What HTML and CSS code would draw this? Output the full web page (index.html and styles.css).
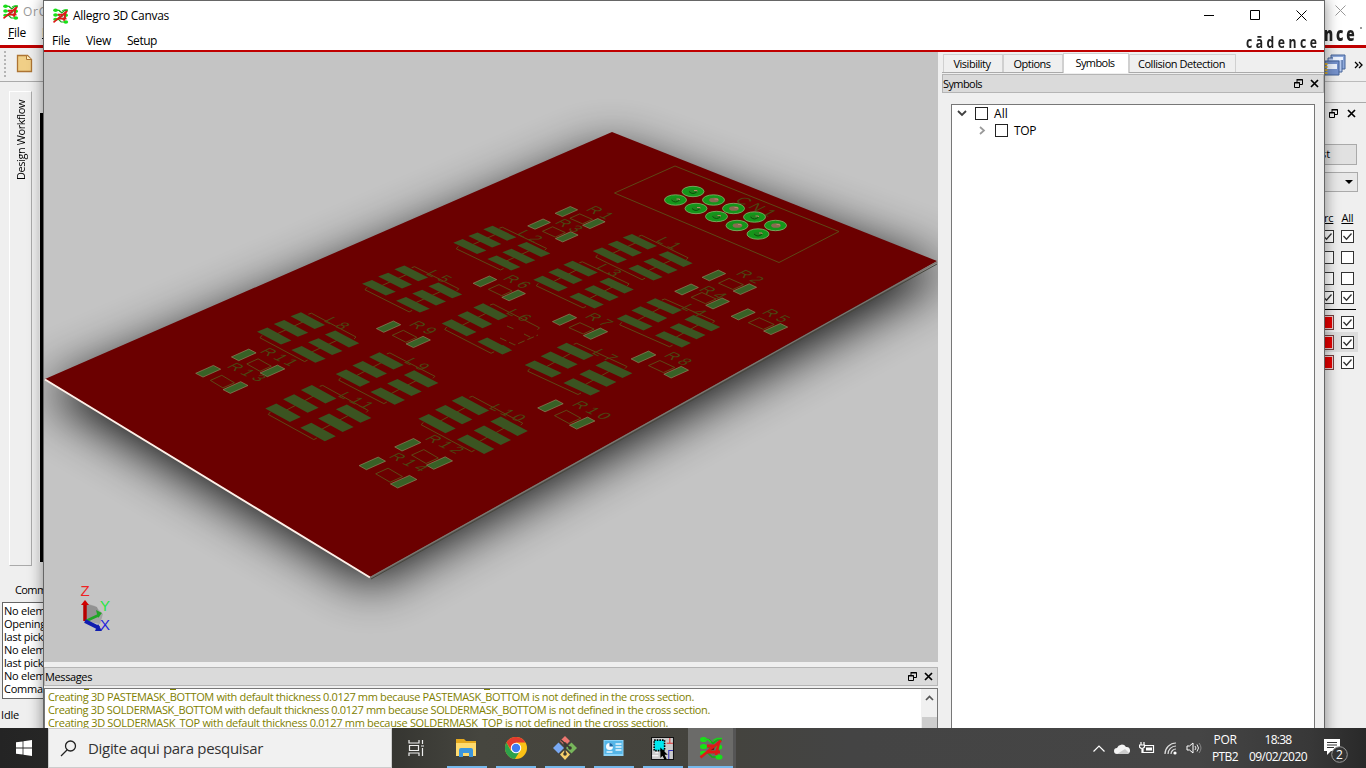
FILE: index.html
```html
<!DOCTYPE html>
<html lang="pt-BR">
<head>
<meta charset="utf-8">
<title>Allegro 3D Canvas</title>
<link rel="stylesheet" href="styles.css">
</head>
<body>
<svg class="defs" width="0" height="0">
  <symbol id="allegro" viewBox="0 0 24 24">
    <g stroke="#17a817" stroke-width="1.700" fill="none"><path d="M4 3.500h6l4 4 4-3.500h5M4 10.500h5l4 4M4 17h5l4 4h7M14 10.500h6M14 17l6-3"/></g>
    <g fill="#18e018"><ellipse cx="4.500" cy="3.500" rx="3.500" ry="2.600"/><ellipse cx="4.500" cy="10.500" rx="3.500" ry="2.600"/><ellipse cx="4.500" cy="17" rx="3.500" ry="2.300"/><ellipse cx="20" cy="11" rx="3.200" ry="2.600"/><ellipse cx="20" cy="21" rx="3.500" ry="2.600"/></g>
    <path d="M1.500 21.500 22 4.500" stroke="#e01818" stroke-width="2.500"/><path d="M8 10h7M8 16h13M20 6l-3 13" stroke="#e01818" stroke-width="2.800"/><path d="m12 14 3.500-2.500-.5 2.500z" fill="#7c1010"/><path d="M14 4.500l4-2h5M12 6.500l-3-3H5" fill="none" stroke="#1fd01f" stroke-width="1.500"/>
  </symbol>
  <symbol id="float" viewBox="0 0 9 9"><path d="M3 .5h5.500v5H6M3 0v3M.5 3.500h5v5h-5zM3 1h6M0 4h6" fill="none" stroke="#000"/></symbol>
  <symbol id="x" viewBox="0 0 9 9"><path d="m1 1 7 7m0-7-7 7" fill="none" stroke="#000" stroke-width="1.700"/></symbol>
  <symbol id="tick" viewBox="0 0 13 13"><path d="m2.500 6 3 3.200 5-5.700" fill="none" stroke="#333" stroke-width="1.300"/></symbol>
</svg>

<main class="desktop">
  <section class="back">
    <div class="back-left">
      <div class="back-title"><svg class="i17"><use href="#allegro"/></svg><span class="t dim" data-w="24">OrC</span></div>
      <div class="back-menu"><span class="t" data-w="18"><u>F</u>ile</span><span class="t"><u>E</u></span></div>
      <div class="back-tools"><i class="grip"></i>
        <svg width="17" height="19" viewBox="0 0 17 19"><path d="M1.500 1.500h10l4 4v12h-14z" fill="#f0cf87" stroke="#ad7433" stroke-width="1.300"/><path d="M10.500 1.500v4h5" fill="#fff0c0" stroke="#ad7433"/></svg>
      </div>
      <div class="back-work"><div class="workflow"><span class="t" data-w="80">Design Workflow</span></div><div class="black"></div></div>
      <div class="comm"><span class="t">Comm</span></div>
      <div class="log"><p>No elem</p><p>Opening</p><p>last pick</p><p>No elem</p><p>last pick</p><p>No elem</p><p>Comman</p></div>
      <div class="idle"><span class="t" data-w="18">Idle</span></div>
    </div>
    <div class="back-right">
      <div class="br-title"><svg width="11" height="11" viewBox="0 0 11 11"><path d="m.5.5 10 10m0-10-10 10" stroke="#999" fill="none"/></svg></div>
      <div class="br-logo"><span>nce</span><i></i></div>
      <div class="br-tools"><svg width="22" height="24" viewBox="0 0 22 24"><g stroke="#456398"><path fill="#8da8da" d="M7 2h14v14H7z"/><path fill="#b8cbef" d="M4 5h14v14H4z"/><path fill="#7692cc" d="M1 8h14v14H1z"/></g><path d="M9 4h10v3H9zM3 11h10v5H3z" fill="#eef4ff"/><path d="M2 10v11" stroke="#d3ab30" stroke-width="3" stroke-dasharray="2 1"/></svg>
        <svg width="9" height="8" viewBox="0 0 9 8"><path d="m1 1 3 3-3 3m4-6 3 3-3 3" fill="none" stroke="#000" stroke-width="1.300"/></svg></div>
      <div class="br-head"><svg class="i9"><use href="#float"/></svg><svg class="i9"><use href="#x"/></svg></div>
      <div class="br-button">st</div>
      <div class="br-combo"><i></i></div>
      <div class="br-cols"><u>rc</u><u>All</u></div>
      <div class="br-rows">
        <div><b><svg><use href="#tick"/></svg></b><b><svg><use href="#tick"/></svg></b></div>
        <div><b></b><b></b></div><div><b></b><b></b></div>
        <div><b><svg><use href="#tick"/></svg></b><b><svg><use href="#tick"/></svg></b></div>
        <hr>
        <div><em></em><b><svg><use href="#tick"/></svg></b></div>
        <div class="hot"><em></em><b><svg><use href="#tick"/></svg></b></div>
        <div><em></em><b><svg><use href="#tick"/></svg></b></div>
      </div>
    </div>
  </section>

  <section class="window">
    <header class="title"><svg class="i17"><use href="#allegro"/></svg><span class="t seg" data-w="96">Allegro 3D Canvas</span>
      <div class="caption"><svg width="11" height="11"><path d="M0 5.500h10" stroke="#000"/></svg><svg width="11" height="11"><path d="M.5.5h9v9h-9z" stroke="#000" fill="none"/></svg><svg width="11" height="11"><path d="m.5.5 10 10m0-10-10 10" stroke="#000" fill="none"/></svg></div>
    </header>
    <nav class="menu"><span class="t seg" data-w="18">File</span><span class="t seg" data-w="25">View</span><span class="t seg" data-w="30">Setup</span><span class="logo"><span>c<span class="a">ā</span>dence</span></span></nav>
    <div class="content">
      <div class="left">
        <svg class="scene" id="scene" viewBox="44 52 894 610" width="894" height="610"></svg>
        <div class="dockbar msg"><span class="t" data-w="47">Messages</span><svg class="i9"><use href="#float"/></svg><svg class="i9"><use href="#x"/></svg></div>
        <div class="messages">
          <div class="lines">
            <div class="cut"></div>
            <p><span data-w="646">Creating 3D PASTEMASK_BOTTOM with default thickness 0.0127 mm because PASTEMASK_BOTTOM is not defined in the cross section.</span></p>
            <p><span data-w="662">Creating 3D SOLDERMASK_BOTTOM with default thickness 0.0127 mm because SOLDERMASK_BOTTOM is not defined in the cross section.</span></p>
            <p><span data-w="620">Creating 3D SOLDERMASK_TOP with default thickness 0.0127 mm because SOLDERMASK_TOP is not defined in the cross section.</span></p>
          </div>
          <div class="scroll"><svg width="9" height="6" viewBox="0 0 9 6"><path d="m1 5 3.500-3.500L8 5" fill="none" stroke="#555" stroke-width="1.700"/></svg><i></i></div>
        </div>
      </div>
      <aside class="right">
        <div class="tabs"><div class="w1"><span class="t" data-w="37">Visibility</span></div><div class="w2"><span class="t" data-w="37">Options</span></div><div class="w3 on"><span class="t" data-w="39">Symbols</span></div><div class="w4"><span class="t" data-w="87">Collision Detection</span></div></div>
        <div class="dockbar"><span class="t" data-w="39">Symbols</span><svg class="i9"><use href="#float"/></svg><svg class="i9"><use href="#x"/></svg></div>
        <div class="tree">
          <div class="node"><svg width="10" height="7" viewBox="0 0 10 7"><path d="m1 1 4 4 4-4" fill="none" stroke="#404040" stroke-width="1.800"/></svg><b></b><span class="t seg" data-w="14">All</span></div>
          <div class="node sub"><svg width="10" height="9" viewBox="0 0 10 9"><path d="m3 1 4 3.500L3 8" fill="none" stroke="#999" stroke-width="1.700"/></svg><b></b><span class="t seg" data-w="22">TOP</span></div>
        </div>
      </aside>
    </div>
  </section>
</main>

<footer class="taskbar">
  <div class="start"><svg width="16" height="16" viewBox="0 0 16 16"><path fill="#fff" d="M0 2.300 6.600 1.400v6.200H0zM7.400 1.300 16 0v7.600H7.400zM0 8.400h6.600v6.200L0 13.700zM7.400 8.400H16V16l-8.600-1.200z"/></svg></div>
  <div class="search"><svg width="17" height="17" viewBox="0 0 17 17"><circle cx="10.500" cy="6" r="5" fill="none" stroke="#222" stroke-width="1.300"/><path d="m7 10-6 6" stroke="#222" stroke-width="1.300"/></svg><span data-w="175">Digite aqui para pesquisar</span></div>
  <div class="apps">
    <div class="tv"><svg width="17" height="16" viewBox="0 0 17 16"><path d="M1 0v3h10V0M1 16v-3h10v3M1.500 5.500h9v5h-9zM14.500 0v4m0 4v8M13 6h3" fill="none" stroke="#eee" stroke-width="1.200"/></svg></div>
    <div class="run"><svg width="21" height="20" viewBox="0 0 21 20"><path d="M0 1h8l2 2h10v15H0z" fill="#e5a91e"/><path d="M0 5h20v13H0z" fill="#ffdb6e"/><path d="M3 19v-7q0-2 2-2h10q2 0 2 2v7h-4v-4H7v4z" fill="#3c96dd"/></svg></div>
    <div class="run"><svg width="22" height="22" viewBox="0 0 21 21"><circle cx="10.500" cy="10.500" r="10.500" fill="#fbc116"/><path d="M1.400 5.200A10.500 10.500 0 0 1 19.600 5.300h-9L6 13z" fill="#e33b2e"/><path d="M1.400 5.200A10.500 10.500 0 0 0 9.500 21l5-8-4 2-5-2z" fill="#2da14b"/><circle cx="10.500" cy="10.500" r="5" fill="#fff"/><circle cx="10.500" cy="10.500" r="4" fill="#3f7cf0"/></svg></div>
    <div class="run"><svg width="24" height="24" viewBox="0 0 24 24"><path d="m12 0 5 5-5 5-5-5z" fill="#ee7770"/><path d="m18.500 6.500 5.500 5.500-5.500 5.500-5.500-5.500z" fill="#77b65b"/><path d="m5.500 6.500 5.500 5.500-5.500 5.500-5.500-5.500z" fill="#79a9f3"/><path d="m12 13.500 5 5-5 5.500-5-5.500z" fill="#f8d16b"/><path d="M8 4l9 8M12 8v10" stroke="#3b3931" stroke-width="1.500"/><circle cx="12" cy="8" r="1.800" fill="#3b3931"/><circle cx="17" cy="12" r="1.800" fill="#3b3931"/><circle cx="12" cy="18" r="1.800" fill="#3b3931"/></svg></div>
    <div class="run"><svg width="21" height="16" viewBox="0 0 20 16"><path d="M0 0h20v16H0z" fill="#8bd3f8"/><path d="M1 1h18v13H1z" fill="#55b6e8"/><circle cx="6" cy="6.500" r="3.500" fill="#f7fbff"/><path d="M6 6.500V3a3.500 3.500 0 0 1 3.500 3.500z" fill="#1769a8"/><path d="M12 4h6M12 7h6M12 10h6M3 12h6" stroke="#e9f7ff" stroke-width="1.300"/></svg></div>
    <div class="run"><svg width="23" height="23" viewBox="0 0 22 22"><path d="M.5.5h21v21H.5z" fill="#ccc" stroke="#111"/><path d="M3 3h10v10H3z" fill="#00e8ee" stroke="#000" stroke-width="1.500" stroke-dasharray="1.500 1"/><path d="M15 6h6M18 1v5" stroke="#d33"/><path d="M17 21v-8h4" stroke="#33b" fill="none"/><path d="m9 10 7 7-3 0 2 4-2 1-2-4-2 2z" fill="#000"/><path d="M1 18h6M4 15h3" stroke="#fff"/></svg></div>
    <div class="run active"><svg width="24" height="24"><use href="#allegro"/></svg></div>
  </div>
  <div class="tray">
    <svg width="12" height="7" viewBox="0 0 12 7"><path d="m.5 6.500 5.500-5.500 5.500 5.500" fill="none" stroke="#fff" stroke-width="1.200"/></svg>
    <svg width="16" height="11" viewBox="0 0 16 11"><path d="M3 11a3 3 0 0 1 0-6 5 5 0 0 1 9-1 3.500 3.500 0 0 1 1 7z" fill="#f4f4f4"/><path d="M3 11 11 6l4 4-2 1z" fill="#ccc"/></svg>
    <svg width="16" height="12" viewBox="0 0 16 12"><path d="M5 3.500h9.500v7H4V7M2 0v3m3-3v3M.5 3h5v2q-2.500 3-5 0zM3 6v5" fill="none" stroke="#fff" stroke-width="1.200"/><path d="M7 5.500h6v3H7z" fill="#fff"/></svg>
    <svg width="13" height="13" viewBox="0 0 13 13"><g fill="none" stroke="#ddd" stroke-width="1.200"><path d="M1 12A11 11 0 0 1 12 1M4 12a8 8 0 0 1 8-8M7 12a5 5 0 0 1 5-5"/></g><circle cx="11" cy="11" r="1.600" fill="#fff"/></svg>
    <svg width="17" height="12" viewBox="0 0 17 12"><path d="M1 4h2.500L7 1v10L3.500 8H1z" fill="none" stroke="#fff"/><path d="M9 4q2 2 0 4M11 2.500q3 3.500 0 7" fill="none" stroke="#eee"/><path d="M13 1q4 5 0 10" fill="none" stroke="#888"/></svg>
  </div>
  <div class="lang"><span data-w="23">POR</span><span data-w="26">PTB2</span></div>
  <div class="clock"><span data-w="27">18:38</span><span data-w="58">09/02/2020</span></div>
  <div class="note"><svg width="26" height="26" viewBox="0 0 26 26"><path d="M1 1h16v12H8l-4 4v-4H1z" fill="#fff"/><path d="M4 4.500h10M4 7h10M4 9.500h7" stroke="#333"/><circle cx="16.500" cy="16.500" r="7.800" fill="#333" stroke="#999"/><text x="16.500" y="20.500" text-anchor="middle">2</text></svg></div>
</footer>
<script src="board.js"></script>
</body>
</html>
```
FILE: styles.css
```css
* { box-sizing: border-box; }
body { margin: 0; width: 1366px; height: 768px; overflow: hidden; display: grid; grid-template-rows: 728px 40px; font: 11px/13px "Open Sans", "Noto Sans", sans-serif; color: #000; }
p { margin: 0; }
.defs { position: absolute; }
svg { flex: none; display: block; }
span { white-space: nowrap; }
.i17 { width: 17px; height: 16px; }
.i9 { width: 9px; height: 9px; }
.desktop { position: relative; overflow: hidden; background: #efefef; }
.back { height: 728px; display: flex; justify-content: space-between; }
.back-left { width: 44px; overflow: hidden; display: flex; flex-direction: column; }
.back-left > div { flex: none; }
.back-title { height: 24px; background: #fff; display: flex; align-items: center; gap: 4px; padding: 0 0 1px 2px; font-size: 12px; }
.dim { color: #999; }
.back-menu { height: 24px; background: #fff; border-bottom: 3px solid #c00000; display: flex; gap: 16px; padding: 2px 0 0 8px; font-size: 12px; }
.back-tools { height: 34px; border-bottom: 1px solid #aaa; display: flex; align-items: center; gap: 10px; padding: 0 0 2px 4px; }
.grip { height: 26px; border-left: 2px dotted #b5b5b5; }
.back-work { height: 486px; display: flex; padding-top: 9px; gap: 7px; padding-left: 9px; }
.workflow { width: 23px; height: 475px; border: 1px solid #fff; border-right-color: #aaa; border-bottom-color: #aaa; padding-top: 7px; }
.workflow span { display: block; writing-mode: vertical-rl; transform: rotate(180deg); margin-left: 4px; height: 81px; line-height: 14px; }
.black { width: 5px; height: 449px; margin-top: 22px; background: #000; border-left: 1px solid #fff; }
.comm { height: 34px; padding: 15px 0 0 15px; letter-spacing: -.6px; }
.log { height: 97px; margin-left: 2px; border: 1px solid #666; background: #fff; padding: 1px 0 0 1px; letter-spacing: -.25px; }
.log p { white-space: nowrap; height: 13px; }
.idle { padding: 9px 0 0 1px; }
.back-right { width: 42px; overflow: hidden; display: flex; flex-direction: column; }
.back-right > div { flex: none; }
.br-title { height: 24px; padding: 5px 0 0 11px; background: #fff; }
.br-logo { height: 24px; background: #fff; border-bottom: 3px solid #c00000; display: flex; font: 800 19px/20px "Open Sans", sans-serif; color: #222; }
.br-logo span { display: block; transform: scaleX(.72); transform-origin: 0 0; letter-spacing: 4px; width: 36px; }
.br-logo i { width: 2px; height: 2px; border-radius: 1px; background: #777; margin-top: 3px; }
.br-tools { height: 34px; border-bottom: 1px solid #bbb; display: flex; align-items: center; gap: 8px; }
.br-head { height: 42px; margin-top: 20px; border-top: 1px solid #aaa; padding: 6px 0 0 5px; display: flex; gap: 9px; }
.br-button { width: 33px; height: 21px; border: 1px solid #aaa; background: #e1e1e1; line-height: 18px; text-indent: -4px; }
.br-combo { width: 34px; height: 20px; margin-top: 7px; border: 1px solid #aaa; background: #e8e8e8; padding: 7px 0 0 20px; }
.br-combo i { display: block; width: 0; border: 4px solid transparent; border-top-color: #000; border-bottom: 0; }
.br-cols { height: 34px; padding-top: 19px; display: flex; gap: 8px; letter-spacing: -.2px; }
.br-rows { display: grid; grid-template-rows: 21px 21px 20px 19px 5px 20px 20px 20px; }
.br-rows div { display: flex; align-items: center; gap: 7px; padding-left: 0; width: 34px; }
.br-rows b { width: 13px; height: 13px; border: 1px solid #333; background: #fff; }
.br-rows b:first-child { width: 10px; border-left: 0; }
.br-rows b svg { width: 13px; height: 13px; margin: -1px; }
.br-rows b:first-child svg { margin-left: -3px; }
.br-rows em { width: 10px; height: 15px; background: #e80000; border: 1px solid #744; border-left: 0; box-shadow: inset -1px 0 #ecc, inset 0 1px #ecc, inset 0 -1px #ecc; }
.br-rows hr { width: 32px; margin: 2px 0; border: 0; border-top: 1px solid #000; }
.br-rows .hot { background: #ddd; }
.window { position: absolute; left: 43px; top: 0; width: 1282px; height: 760px; border: 1px solid #666; background: #efefef; box-shadow: 0 0 14px rgba(0,0,0,.45); display: flex; flex-direction: column; }
.seg { font-size: 12px; }
.title { height: 29px; background: #fff; display: flex; align-items: center; padding-left: 8px; gap: 4px; }
.caption { margin-left: auto; display: flex; gap: 35px; padding-right: 17px; }
.menu { height: 22px; background: #fff; border-bottom: 2px solid #c00000; display: flex; gap: 16px; padding: 4px 4px 0 8px; }
.logo { margin-left: auto; width: 74px; font: 700 16px/16px "Open Sans", sans-serif; color: #222; }
.logo > span { display: block; transform: scaleX(.76); transform-origin: 0 0; letter-spacing: 4.600px; }
.content { flex: 1; display: flex; }
.left { width: 894px; }
.dockbar { height: 19px; border: 1px solid #b5b5b5; background: #dadada; display: flex; align-items: center; gap: 7px; padding: 0 4px 1px 0; }
.dockbar span { margin-right: auto; }
.msg { margin-top: 5px; }
.messages { height: 50px; margin-top: 2px; border: 1px solid #777; background: #fff; display: flex; }
.lines { flex: 1; height: 48px; overflow: hidden; color: #808000; padding-left: 3px; }
.lines p { height: 13px; line-height: 13px; }
.cut { height: 1px; background: linear-gradient(#808000,#808000) 36px 0 / 5px 1px no-repeat, linear-gradient(#808000,#808000) 122px 0 / 6px 1px no-repeat, linear-gradient(#808000,#808000) 436px 0 / 6px 1px no-repeat; }
.scroll { width: 16px; background: #f0f0f0; padding-top: 6px; display: flex; flex-direction: column; align-items: center; gap: 16px; }
.scroll i { width: 15px; height: 30px; background: #cdcdcd; }
.right { width: 384px; margin-left: 4px; height: 700px; display: flex; flex-direction: column; }
.tabs { height: 20px; margin-top: 1px; display: flex; align-items: flex-end; padding-left: 1px; border-bottom: 1px solid #aaa; }
.tabs > div { height: 18px; border: 1px solid #d0d0d0; border-bottom: 0; text-align: center; line-height: 18px; padding-right: 2px; }
.tabs .w1 { width: 60px; } .tabs .w2 { width: 60px; } .tabs .w3 { width: 66px; } .tabs .w4 { width: 107px; }
.tabs .on { height: 20px; background: #fff; margin-bottom: -1px; }
.right .dockbar { margin-top: 1px; }
.tree { flex: 1; margin: 11px 9px 0 9px; border: 1px solid #777; background: #fff; }
.node { height: 17px; display: flex; align-items: center; padding: 0 0 0 5px; gap: 8px; }
.node b { width: 13px; height: 13px; border: 1px solid #222; margin-right: -2px; }
.sub { padding-left: 25px; }
.taskbar { background: linear-gradient(90deg,#242424 0,#353531 390px,#46463f 480px,#44433d 700px,#444 850px,#454545 1200px,#383838 1310px,#292929); display: flex; color: #fff; position: relative; z-index: 2; }
.start { width: 48px; display: grid; place-items: center; }
.search { width: 344px; background: #f1f1f1; border: 1px solid #ccc; display: flex; align-items: center; padding-left: 11px; gap: 11px; color: #333; font-size: 15px; }
.apps { display: flex; width: 345px; }
.apps > div { width: 49px; display: grid; place-items: center; }
.apps > .tv { width: 50px; padding-right: 2px; }
.run { background: linear-gradient(#76b9ed,#76b9ed) center bottom / 40px 2px no-repeat; }
.apps > .active { width: 48px; margin-left: 1px; border-right: 3px solid #555; background: linear-gradient(#76b9ed,#76b9ed) bottom / 100% 2px no-repeat #6b6b69; }
.tray { margin-left: 356px; display: flex; align-items: center; gap: 8px; width: 112px; }
.tray svg:nth-child(n+2) { margin-left: 1px; }
.lang, .clock { display: flex; flex-direction: column; align-items: center; justify-content: center; font-size: 12px; line-height: 17px; padding-bottom: 1px; }
.lang { width: 40px; }
.clock { width: 62px; margin-left: 2px; }
.note { margin-left: 14px; padding-top: 10px; }
.note text { font: 12px "Open Sans", sans-serif; fill: #fff; }
.label { font-family: "Liberation Sans", sans-serif; font-size: 16px; letter-spacing: 4px; fill: #4c4512; }
.pad { fill: #3b5421; }
.rpad { fill: #386126; stroke: #969166; stroke-width: .6; }
.silk { fill: none; stroke: #5b591b; stroke-width: .8; }
.axis { font: 15px "Liberation Sans", sans-serif; }
```
FILE: board.js
```javascript
document.querySelectorAll('[data-w]').forEach(function (el) {
  var n = el.textContent.length;
  var r = document.createRange();
  r.selectNodeContents(el);
  var b = r.getBoundingClientRect();
  var natural = Math.max(b.width, el.closest('.workflow') ? b.height : 0);
  el.style.letterSpacing = ((+el.dataset.w - natural) / n).toFixed(3) + 'px';
});

function poly(cls, pts) {
  return '<polygon class="' + cls + '" points="' + pts.map(function (p) { return p[0].toFixed(1) + ',' + p[1].toFixed(1); }).join(' ') + '"/>';
}
function para(cls, x, y, a, b) {
  return poly(cls, [[x, y], [x + a[0], y + a[1]], [x + a[0] + b[0], y + a[1] + b[1]], [x + b[0], y + b[1]]]);
}
function label(t, x, y) {
  return '<text class="label" transform="matrix(.86 .4 -.88 .44 ' + x + ' ' + y + ')">' + t + '</text>';
}
function mul(v, k) { return [v[0] * k, v[1] * k]; }
function line(pts) { return '<polyline class="silk" points="' + pts.map(function (p) { return p[0] + ',' + p[1]; }).join(' ') + '"/>'; }

// name, first pad, pitch, row offset, label position
var arrays = [
  ['L1', 592.7, 250.7, [15, -6.8], [35.7, 17.3], 655, 241],
  ['L2', 453.3, 242.3, [15, -6.7], [34, 16.3], 516, 234],
  ['L3', 533.3, 279.3, [15, -7.5], [36, 17], 595, 268],
  ['L4', 616.7, 318.3, [14.7, -8.1], [38.3, 16.9], 680, 308],
  ['L5', 362, 283.3, [16.2, -7.2], [34, 17], 425, 274],
  ['L6', 441.7, 323, [15.8, -8], [35.7, 18.3], 505, 313],
  ['L7', 524.7, 364.7, [16, -8.8], [38.7, 17.9], 591, 353],
  ['L8', 257, 331.3, [16.8, -7.7], [34.3, 18.3], 323, 321],
  ['L9', 335.7, 373.7, [16.7, -8.6], [34.7, 18], 403, 362],
  ['L10', 418.3, 418.3, [16.7, -9], [38.7, 20.7], 488, 408],
  ['L11', 265.3, 408, [17.8, -9.2], [35, 19.3], 337, 396]
];
// name, first pad, second pad offset, label position
var resistors = [
  ['R1', 554.7, 212.7, [27.5, 12], 585, 210], ['R3', 527.3, 225.3, [27.7, 12.7], 554, 223],
  ['R6', 472.7, 282.7, [28.7, 14], 502, 279], ['R7', 552, 321, [31, 14], 584, 317],
  ['R2', 701.7, 276.7, [31, 13.7], 735, 274], ['R4', 674.3, 290.7, [31, 14], 698, 290],
  ['R5', 730.7, 315.7, [32.5, 14.7], 761, 313], ['R8', 630.7, 358.3, [32.7, 15.3], 663, 356],
  ['R10', 537.3, 407.3, [31.7, 17.3], 571, 405], ['R9', 376, 328, [29.7, 15.3], 408, 325],
  ['R11', 231, 356.3, [28.7, 16], 259, 352], ['R13', 195.3, 372.7, [27.3, 16.3], 226, 367],
  ['R12', 394.3, 446.3, [31.7, 18.3], 424, 439], ['R14', 358.7, 465, [31.3, 18.3], 388, 457]
];
var board = '612,132 937,261 370,577 45,379';
var out = '<defs><filter id="soft" x="-30%" y="-30%" width="160%" height="160%"><feGaussianBlur stdDeviation="25"/></filter></defs>' +
  '<rect x="44" y="52" width="894" height="610" fill="#c4c4c4"/>' +
  '<polygon points="610,148 950,272 370,586 42,392" fill="#000" opacity=".9" filter="url(#soft)"/>' +
  '<polygon points="' + board + '" fill="#6b0000"/>' +
  '<path d="M45 379.500 370 577.500" stroke="#fff0e8" stroke-width="2"/><path d="M370 577.500 937 262" stroke="#807870" stroke-width="1.300"/>' +
  '<path d="M371 579 937 264" stroke="#47473d" stroke-width="1"/>';

arrays.forEach(function (a) {
  var x = a[1], y = a[2], s = a[3], r = a[4];
  var long = mul(r, .7), short = [s[0] * .62, s[1] * .53];
  var k = 1.3, tx = x + 3 * s[0] + 4, ty = y + 3 * s[1] + 5;
  out += line([[x + 5, y + 4], [x + 3, y + 6.5], [x + 3 + r[0] * k, y + 6.5 + r[1] * k], [x + 6 + r[0] * k, y + 5 + r[1] * k]]);
  out += line([[tx - 3, ty + 1], [tx, ty], [tx + r[0] * k, ty + r[1] * k], [tx - 2 + r[0] * k, ty + 2 + r[1] * k]]);
  for (var row = 0; row < 2; row++) {
    var bx = x + r[0] * row, by = y + r[1] * row;
    if (a[0] !== 'L6' || !row) out += line([[bx + long[0] * .6, by + long[1] * .4], [bx + long[0] * .6 + 2 * s[0], by + long[1] * .4 + 2 * s[1]]]);
    for (var i = 0; i < 3; i++) {
      if (a[0] === 'L6' && row && i) continue;
      out += para('pad', bx + s[0] * i, by + s[1] * i + .4, long, short);
    }
  }
  out += label(a[0], a[5], a[6]);
});
out += '<path class="pad" d="m499 347 4-2 7 4-5 3z"/><path class="silk" stroke-dasharray="7 3" d="M500 338l15 7 23-10M507 326l7 3M524 334l8 4"/>';

resistors.forEach(function (a) {
  var x = a[1] + .4, y = a[2] + .6, o = a[3], k = 1 + (y - 212) / 1000;
  var u = [15.2 * k, -6.800 * k], v = [7.3, 3.300 * k];
  out += para('silk', x + o[0] * .5 + 1, y + o[1] * .5 - 1, mul(u, .65), mul(o, .46));
  out += para('rpad', x, y, u, v) + para('rpad', x + o[0], y + o[1], u, v);
  out += label(a[0], a[4], a[5]);
});

out += '<path class="silk" d="M614.500 193 675 166 839 231.500 779 262.500z"/>' + label('CN1', 734, 201);
[[693, 191.500], [713.500, 200], [733.500, 208.500], [754.500, 217], [775.500, 225.500], [675.500, 200], [696, 208.500], [716.500, 216.500], [737, 225.500], [758, 234]].forEach(function (p, i) {
  var open = [1, 2, 4, 8].indexOf(i) >= 0;
  out += '<ellipse cx="' + p[0] + '" cy="' + p[1] + '" rx="11" ry="5.200" fill="#14961a" stroke="#84b76c" stroke-width=".8"/>' +
    '<ellipse cx="' + (p[0] + .5) + '" cy="' + p[1] + '" rx="4.800" ry="2.300" fill="' + (open ? '#8a6a52' : '#1f861c') + '"/>' +
    (open ? '' : '<path d="M' + (p[0] - 4) + ' ' + p[1] + 'q4 4 8 0" stroke="#0b500b" fill="none"/>') +
    '<path d="M' + (p[0] + 1) + ' ' + (p[1] - 1) + 'h3v1" stroke="#b58b68" fill="none"/>';
});

out += '<path d="M85 621V603l10 3 8 8-3 10z" fill="#a5a5a5"/><path d="m86 604 11 3 3 9-13 4z" fill="#929292"/>' +
  '<path d="M85 621V604" stroke="#b80000" stroke-width="3.500"/><path d="m81 605 4-5 4 5z" fill="#d20000"/>' +
  '<path d="m86 621 13-6" stroke="#20a626" stroke-width="2.500"/><path d="m96 610 6 3-4 5z" fill="#20a626"/>' +
  '<path d="m85 621 14 7" stroke="#0f1caf" stroke-width="4"/><path d="m98 624 4 7-7 0z" fill="#0f1caf"/>' +
  '<text class="axis" x="80.500" y="596" fill="#ef2222">Z</text><text class="axis" x="100" y="611" fill="#28e644">Y</text><text class="axis" x="100" y="630" fill="#2424db">X</text>';
document.getElementById('scene').innerHTML = out;
```
